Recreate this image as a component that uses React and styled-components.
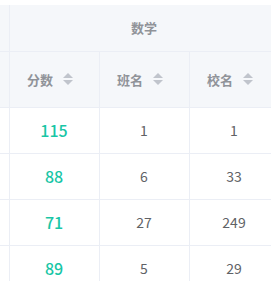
import styled, { createGlobalStyle } from "styled-components";

const GlobalStyle = createGlobalStyle`
  body {
    margin: 0;
    background: #fff;
    font-family: "Noto Sans CJK SC", "Noto Sans", sans-serif;
  }
`;

const Viewport = styled.div`
  width: 271px;
  height: 281px;
  overflow: hidden;
  padding-top: 5px;
  box-sizing: border-box;
`;

const Table = styled.table`
  border-collapse: collapse;
  table-layout: fixed;
  width: 279px;
`;

const HeadCell = styled.th`
  background: #f5f7fa;
  color: #909399;
  font-size: 13px;
  font-weight: 600;
  text-align: center;
  height: ${(p) => p.$h}px;
  padding: 0;
  border-right: 1px solid #ebeef5;
  border-bottom: 1px solid #ebeef5;
  box-sizing: border-box;
`;

const HeadInner = styled.div`
  display: flex;
  align-items: center;
  justify-content: center;
  gap: 10px;
  padding-right: 8px;
`;

const Caret = styled.span`
  display: inline-flex;
  flex-direction: column;
  gap: 2px;

  &::before,
  &::after {
    content: "";
    width: 0;
    height: 0;
    border-left: 5px solid transparent;
    border-right: 5px solid transparent;
  }
  &::before {
    border-bottom: 5px solid #c0c4cc;
  }
  &::after {
    border-top: 5px solid #c0c4cc;
  }
`;

const Cell = styled.td`
  height: 46px;
  padding: 0;
  text-align: center;
  font-size: ${(p) => (p.$score ? 16 : 14)}px;
  font-weight: ${(p) => (p.$score ? 500 : 400)};
  color: ${(p) => (p.$score ? "#19c6a6" : "#606266")};
  border-right: 1px solid #ebeef5;
  border-bottom: 1px solid #ebeef5;
  box-sizing: border-box;
`;

const rows = [
  { score: 115, cls: 1, school: 1 },
  { score: 88, cls: 6, school: 33 },
  { score: 71, cls: 27, school: 249 },
  { score: 89, cls: 5, school: 29 },
];

export default function App() {
  return (
    <>
      <GlobalStyle />
      <Viewport>
        <Table>
          <colgroup>
            <col style={{ width: 9 }} />
            <col style={{ width: 90 }} />
            <col style={{ width: 90 }} />
            <col style={{ width: 90 }} />
          </colgroup>
          <thead>
            <tr>
              <HeadCell $h={46} />
              <HeadCell $h={46} colSpan={3}>
                数学
              </HeadCell>
            </tr>
            <tr>
              <HeadCell $h={56} />
              {["分数", "班名", "校名"].map((t) => (
                <HeadCell $h={56} key={t}>
                  <HeadInner>
                    {t}
                    <Caret />
                  </HeadInner>
                </HeadCell>
              ))}
            </tr>
          </thead>
          <tbody>
            {rows.map((r, i) => (
              <tr key={i}>
                <Cell />
                <Cell $score>{r.score}</Cell>
                <Cell>{r.cls}</Cell>
                <Cell>{r.school}</Cell>
              </tr>
            ))}
          </tbody>
        </Table>
      </Viewport>
    </>
  );
}
